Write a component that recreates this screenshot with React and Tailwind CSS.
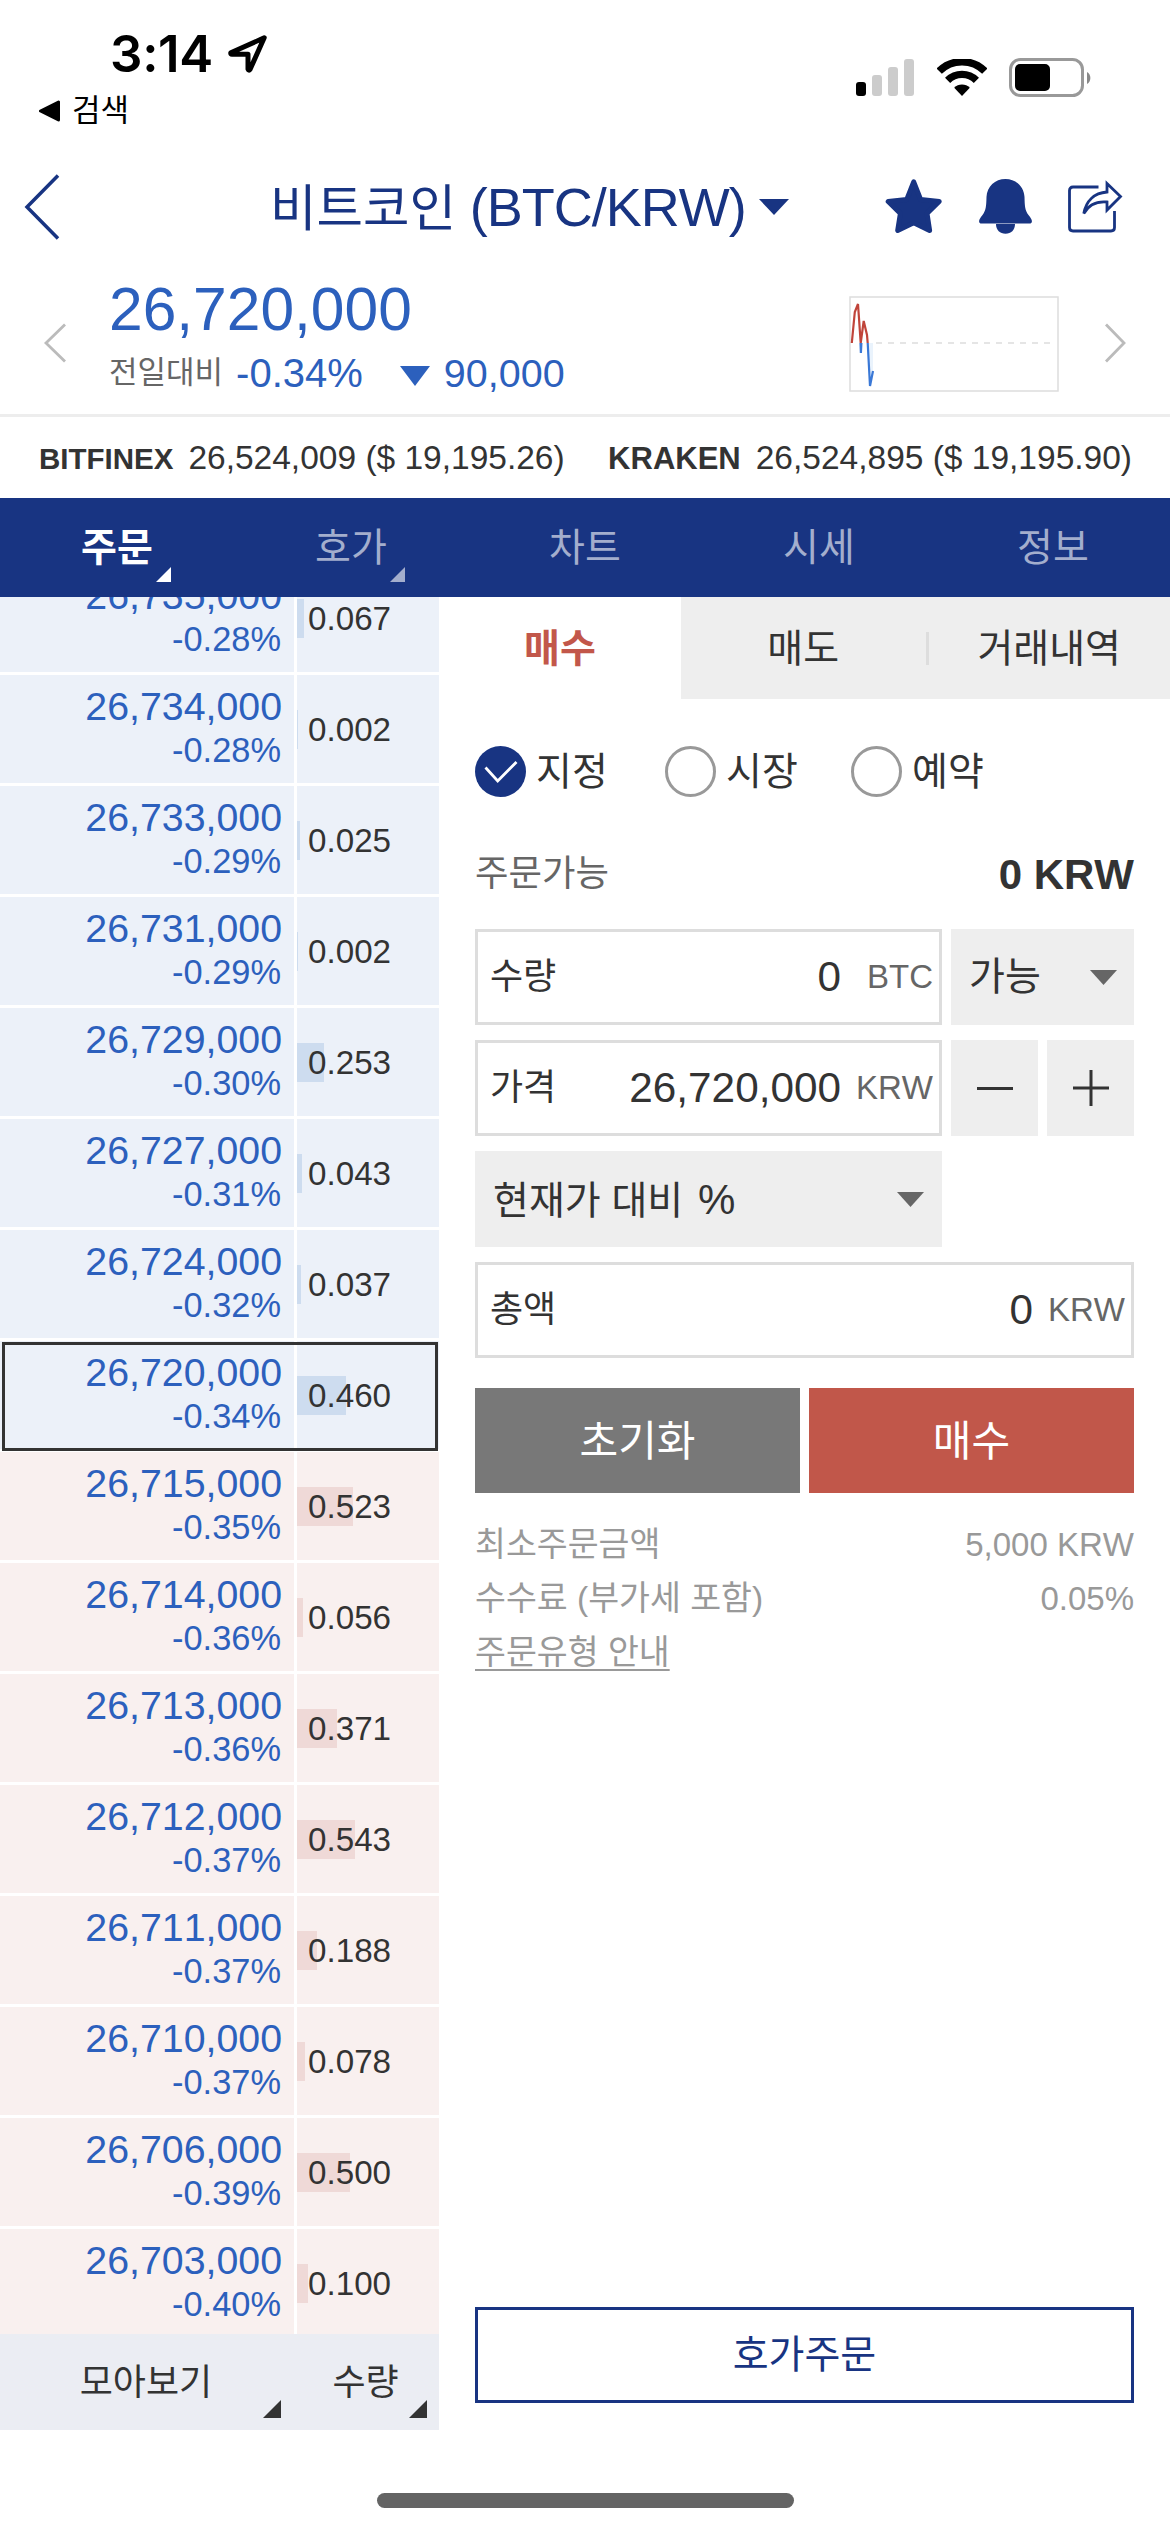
import React, { useState } from 'react'
import clsx from 'clsx'

const NAV = [
  { id: 'order', label: '주문', corner: true },
  { id: 'book', label: '호가', corner: true },
  { id: 'chart', label: '차트' },
  { id: 'price', label: '시세' },
  { id: 'info', label: '정보' },
]

const ROWS = [
  { price: '26,735,000', rate: '-0.28%', qty: '0.067', side: 'ask' },
  { price: '26,734,000', rate: '-0.28%', qty: '0.002', side: 'ask' },
  { price: '26,733,000', rate: '-0.29%', qty: '0.025', side: 'ask' },
  { price: '26,731,000', rate: '-0.29%', qty: '0.002', side: 'ask' },
  { price: '26,729,000', rate: '-0.30%', qty: '0.253', side: 'ask' },
  { price: '26,727,000', rate: '-0.31%', qty: '0.043', side: 'ask' },
  { price: '26,724,000', rate: '-0.32%', qty: '0.037', side: 'ask' },
  { price: '26,720,000', rate: '-0.34%', qty: '0.460', side: 'ask', current: true },
  { price: '26,715,000', rate: '-0.35%', qty: '0.523', side: 'bid' },
  { price: '26,714,000', rate: '-0.36%', qty: '0.056', side: 'bid' },
  { price: '26,713,000', rate: '-0.36%', qty: '0.371', side: 'bid' },
  { price: '26,712,000', rate: '-0.37%', qty: '0.543', side: 'bid' },
  { price: '26,711,000', rate: '-0.37%', qty: '0.188', side: 'bid' },
  { price: '26,710,000', rate: '-0.37%', qty: '0.078', side: 'bid' },
  { price: '26,706,000', rate: '-0.39%', qty: '0.500', side: 'bid' },
  { price: '26,703,000', rate: '-0.40%', qty: '0.100', side: 'bid' },
]

// bar width in px for one unit of quantity
const BAR_SCALE = 106.5

function StatusBar() {
  return (
    <div className="flex h-[156px] shrink-0 justify-between text-black">
      <div className="pt-6">
        <div className="flex items-start pl-[110px]">
          <span className="font-['Inter'] text-[51px] leading-[60px] font-semibold tracking-[-0.3px]">3:14</span>
          <svg width="39" height="38" viewBox="0 0 39 38" className="mt-[11px] ml-[15px]" fill="none" stroke="currentColor" strokeWidth="5" strokeLinejoin="round">
            <path d="M36.2 2.8 L2.8 17.800 Q2.500 19.300 4 19.300 H20 V34 Q20.800 36 22 34.500 Z" />
          </svg>
        </div>
        <div className="flex items-center gap-[12px] pl-[39px] text-[31px] leading-[54px]">
          <svg width="21" height="22" viewBox="0 0 21 22" fill="currentColor" stroke="currentColor" strokeWidth="3" strokeLinejoin="round">
            <path d="M1.5 11 L19.5 2 V20 Z" />
          </svg>
          <span>검색</span>
        </div>
      </div>
      <div className="flex items-start pt-[58px] pr-[79px]">
        <svg width="58" height="38" viewBox="0 0 58 38" className="mt-px">
          <rect x="0" y="23" width="10" height="14" rx="3" fill="#000" />
          <rect x="16" y="16" width="10" height="21" rx="3" fill="#ccc" />
          <rect x="32" y="8" width="10" height="29" rx="3" fill="#ccc" />
          <rect x="48" y="0" width="10" height="37" rx="3" fill="#ccc" />
        </svg>
        <svg width="50" height="38" viewBox="0 0 50 38" className="mt-px ml-[23px]" fill="none" stroke="#000">
          <path d="M2.2 12.2 A32.2 32.2 0 0 1 47.8 12.2" strokeWidth="7.5" />
          <path d="M10.6 21.4 A20.4 20.4 0 0 1 39.4 21.4" strokeWidth="7.3" />
          <path d="M25 37 L17.2 28.8 A11 11 0 0 1 32.8 28.8 Z" fill="#000" stroke="none" />
        </svg>
        <svg width="82" height="39" viewBox="0 0 82 39" className="ml-[22px]">
          <rect x="1.5" y="1.5" width="72" height="36" rx="10" fill="none" stroke="#999" strokeWidth="3" />
          <rect x="6" y="6" width="35" height="27" rx="5" fill="#000" />
          <path d="M78 14 A7 7 0 0 1 78 26 Z" fill="#888" />
        </svg>
      </div>
    </div>
  )
}

function Header() {
  return (
    <header className="flex h-[101px] shrink-0 items-center pr-[47px] pl-[24px] text-[#183482]">
      <svg width="36" height="66" viewBox="0 0 36 66" fill="none" stroke="currentColor" strokeWidth="3.5">
        <path d="M34 1.5 L3 33 L34 64.5" />
      </svg>
      <h1 className="ml-[210px] flex w-[475px] items-baseline pt-[2px] text-[54px] leading-[60px] whitespace-pre">
        <span className="text-[50.5px]">비트코인</span>
        <span className="tracking-[-1px]"> (BTC/KRW)</span>
      </h1>
      <svg width="30" height="16" viewBox="0 0 30 16" className="ml-[14px]" fill="currentColor">
        <path d="M0 0 H30 L15 16 Z" />
      </svg>
      <div className="ml-auto flex items-center gap-[36px]">
        <svg width="58" height="55" viewBox="0 0 58 55" fill="currentColor" stroke="currentColor" strokeWidth="5" strokeLinejoin="round">
          <path d="M28.7 2.8 L35.6 20.5 L54.2 22.4 L42 34.4 L44.6 51.5 L28.7 43.8 L12.7 51.5 L15.4 34.4 L3.2 22.4 L21.8 20.5 Z" />
        </svg>
        <svg width="53" height="56" viewBox="0 0 53 56" fill="currentColor">
          <path d="M26.5 0 C16 0 8 7.500 7.500 18 C7.200 27 7.200 31 3.500 36 C1 39 0 41 .1 42.500 C.3 44 1 44.600 2.500 44.600 H50.500 C52 44.600 52.700 44 52.900 42.500 C53 41 52 39 49.500 36 C45.800 31 45.800 27 45.500 18 C45 7.500 37 0 26.500 0 Z" />
          <path d="M17 45 H36 C36 51 32 54.800 26.500 54.800 C21 54.800 17 51 17 45 Z" />
        </svg>
        <svg width="55" height="54" viewBox="0 0 55 54" fill="none" stroke="currentColor" strokeWidth="2.8">
          <path d="M30.500 7 H5 Q1.500 7 1.500 10.500 V47.500 Q1.500 51 5 51 H43 Q46.500 51 46.500 47.500 V31" />
          <path d="M39 3.500 L52.500 16.500 L39 30 V22 C28 21 20 26 15.800 33.500 C18 21 26 13 39 12 Z" />
        </svg>
      </div>
    </header>
  )
}

function Ticker() {
  return (
    <section className="flex h-[160px] shrink-0 items-start border-b-[3px] border-[#ededed] text-[#2c60bd]">
      <svg width="24" height="40" viewBox="0 0 24 40" className="mt-[66px] ml-[43px]" fill="none" stroke="#bbb" strokeWidth="2.8">
        <path d="M22 1.500 L3 20 L22 38.500" />
      </svg>
      <div className="ml-[42px] pt-[22px]">
        <div className="text-[60.5px] leading-[60px]">26,720,000</div>
        <div className="mt-[14px] flex items-center leading-[40px]">
          <span className="text-[31px] text-[#666]">전일대비</span>
          <span className="ml-[13px] text-[40px]">-0.34%</span>
          <svg width="30" height="20" viewBox="0 0 30 20" className="mt-[5px] ml-[37px]" fill="currentColor">
            <path d="M0 0 H30 L15 20 Z" />
          </svg>
          <span className="ml-[14px] text-[39.5px]">90,000</span>
        </div>
      </div>
      <svg width="210" height="96" viewBox="0 0 210 96" className="mt-[39px] ml-auto" fill="none">
        <rect x="1" y="1" width="208" height="94" stroke="#ddd" strokeWidth="1.500" />
        <path d="M27 47 H202" stroke="#ddd" strokeWidth="1.500" strokeDasharray="6 6" />
        <path d="M19 47 L21 90 L24 75 V47 Z" fill="#eaf3fc" />
        <path d="M2.800 47 L5.800 16 L9 8 L11.700 47 L14.700 25 L18 39 L18.700 47" stroke="#c0443a" strokeWidth="2.2" />
        <path d="M11.500 47 L11.900 57 L12.400 47 M18.700 47 L21 90 L24 75" stroke="#3a78d6" strokeWidth="2.2" />
      </svg>
      <svg width="24" height="40" viewBox="0 0 24 40" className="mt-[66px] mr-[42px] ml-[45px]" fill="none" stroke="#bbb" strokeWidth="2.8">
        <path d="M2 1.500 L20 20 L2 38.500" />
      </svg>
    </section>
  )
}

function Exchanges() {
  return (
    <div className="flex h-[81px] shrink-0 items-baseline justify-between pr-[38px] pl-[39px] text-[33.5px] leading-[81px] text-[#333]">
      <div className="flex items-baseline gap-[15px]">
        <b className="text-[29.5px]">BITFINEX</b>
        <span>26,524,009 ($ 19,195.26)</span>
      </div>
      <div className="flex items-baseline gap-[15px]">
        <b className="text-[31px]">KRAKEN</b>
        <span>26,524,895 ($ 19,195.90)</span>
      </div>
    </div>
  )
}

function Corner({ className }) {
  return (
    <svg viewBox="0 0 16 16" className={clsx('absolute', className)} fill="currentColor">
      <path d="M16 0 V16 H0 Z" />
    </svg>
  )
}

function NavTabs({ active, onChange }) {
  return (
    <nav className="grid h-[99px] shrink-0 grid-cols-5 bg-[#183482] text-[39px]">
      {NAV.map(tab => (
        <button
          key={tab.id}
          onClick={() => onChange(tab.id)}
          className={clsx('flex items-center justify-center', active === tab.id ? 'font-bold text-white' : 'text-[#a3aecd]')}
        >
          <span className="relative leading-[99px]">
            {tab.label}
            {tab.corner && <Corner className="-right-[18px] bottom-[15px] h-[15px] w-[15px]" />}
          </span>
        </button>
      ))}
    </nav>
  )
}

function LadderRow({ row }) {
  const ask = row.side === 'ask'
  const bg = ask ? 'bg-[#ecf1f9]' : 'bg-[#f9f0ef]'
  return (
    <div className="relative flex h-[108px] shrink-0 gap-[3px]">
      <div className={clsx('w-[294px] pt-[7px] pr-[12px] text-right text-[#2c60bd]', bg)}>
        <div className="text-[39.3px] leading-[48px]">{row.price}</div>
        <div className="pr-px text-[34.4px] leading-[40px]">{row.rate}</div>
      </div>
      <div className={clsx('relative flex w-[142px] items-center', bg)}>
        <div
          className={clsx('absolute top-[35px] left-0 h-[39px]', ask ? 'bg-[#cddcef]' : 'bg-[#efd9d7]')}
          style={{ width: Number(row.qty) * BAR_SCALE }}
        />
        <span className="relative pt-[2px] pl-[11px] text-[33.2px] leading-[40px] text-[#333]">{row.qty}</span>
      </div>
      {row.current && <div className="absolute top-px left-[1.5px] h-[109px] w-[436px] border-[3px] border-[#333]" />}
    </div>
  )
}

function Ladder() {
  return (
    <aside className="flex w-[439px] shrink-0 flex-col">
      <div className="h-[1737px] overflow-hidden">
        <div className="-mt-[33px] flex flex-col gap-[3px]">
          {ROWS.map(row => (
            <LadderRow key={row.price} row={row} />
          ))}
        </div>
      </div>
      <div className="flex h-[96px] bg-[#ebedf3] text-[36px] leading-[98px] text-[#333]">
        <button className="relative w-[292px] text-center">
          모아보기
          <Corner className="right-[11px] bottom-[12px] h-[18px] w-[18px]" />
        </button>
        <button className="relative w-[147px] text-center">
          수량
          <Corner className="right-[12px] bottom-[12px] h-[18px] w-[18px]" />
        </button>
      </div>
    </aside>
  )
}

function Radio({ label, checked, onClick, className }) {
  return (
    <button onClick={onClick} className={clsx('flex items-center gap-[10px] text-[39px] leading-[51px]', className)}>
      <svg width="51" height="51" viewBox="0 0 51 51" fill="none">
        {checked ? (
          <>
            <circle cx="25.5" cy="25.5" r="25.5" fill="#183482" />
            <path d="M10.500 21.500 L22.700 35 L41.500 16" stroke="#fff" strokeWidth="2.8" />
          </>
        ) : (
          <circle cx="25.5" cy="25.5" r="24" stroke="#999" strokeWidth="3" />
        )}
      </svg>
      {label}
    </button>
  )
}

function Field({ label, value, unit }) {
  return (
    <div className="flex h-[96px] flex-1 items-center border-[3px] border-[#ddd] pr-[6px] pl-[12px] text-[#333]">
      <span className="text-[36px]">{label}</span>
      <span className="ml-auto text-[42.3px]">{value}</span>
      <span className="w-[92px] text-right text-[33px] text-[#666]">{unit}</span>
    </div>
  )
}

function Caret() {
  return (
    <svg width="27" height="15" viewBox="0 0 27 15" fill="#666">
      <path d="M0 0 H27 L13.500 15 Z" />
    </svg>
  )
}

function OrderPanel() {
  const [side, setSide] = useState('매수')
  const [type, setType] = useState('지정')

  return (
    <main className="flex flex-1 flex-col text-[#333]">
      <div className="flex h-[102px] text-[39px]">
        {['매수', '매도', '거래내역'].map(name => (
          <button
            key={name}
            onClick={() => setSide(name)}
            className={clsx(
              'flex items-center',
              name === '매수' ? 'w-[242px]' : 'w-[244.5px]',
              side === name ? 'font-bold text-[#c2574a]' : 'bg-[#eee]'
            )}
          >
            {name === '거래내역' && <span className="h-[33px] w-[3px] bg-[#ddd]" />}
            <span className="flex-1 pt-[2px]">{name}</span>
          </button>
        ))}
      </div>

      <div className="flex flex-1 flex-col pr-[36px] pl-[36px]">
        <div className="mt-[47px] flex">
          <Radio label="지정" checked={type === '지정'} onClick={() => setType('지정')} className="w-[190px]" />
          <Radio label="시장" checked={type === '시장'} onClick={() => setType('시장')} className="w-[186px]" />
          <Radio label="예약" checked={type === '예약'} onClick={() => setType('예약')} />
        </div>

        <div className="mt-[48px] flex h-[56px] items-center justify-between">
          <span className="pt-[2px] text-[36.4px] text-[#666]">주문가능</span>
          <b className="pt-[2px] text-[42px]">0 KRW</b>
        </div>

        <div className="mt-[28px] flex flex-col gap-[15px]">
          <div className="flex gap-[9px]">
            <Field label="수량" value="0" unit="BTC" />
            <button className="flex w-[183px] items-center justify-between bg-[#eee] pr-[17px] pl-[18px] text-[39px]">
              가능 <Caret />
            </button>
          </div>
          <div className="flex gap-[9px]">
            <Field label="가격" value="26,720,000" unit="KRW" />
            <button className="flex w-[87px] items-center justify-center bg-[#eee]">
              <span className="h-[3px] w-[36px] bg-[#333]" />
            </button>
            <button className="flex w-[87px] items-center justify-center bg-[#eee]">
              <svg width="36" height="36" viewBox="0 0 36 36" stroke="#333" strokeWidth="3">
                <path d="M18 0 V36 M0 18 H36" />
              </svg>
            </button>
          </div>
          <button className="flex h-[96px] w-[467px] items-center justify-between bg-[#eee] pr-[18px] pl-[18px] text-[39px]">
            <span>
              현재가 대비 <span className="ml-[4px] text-[42px]">%</span>
            </span>
            <Caret />
          </button>
          <div className="flex">
            <Field label="총액" value="0" unit="KRW" />
          </div>
        </div>

        <div className="mt-[30px] grid h-[105px] grid-cols-2 gap-[9px] text-[42px] text-white">
          <button className="bg-[#787878] pt-[2px]">초기화</button>
          <button className="bg-[#c1574a] pt-[2px]">매수</button>
        </div>

        <div className="mt-[25px] text-[33.6px] leading-[54px] text-[#999]">
          <div className="flex justify-between">
            <span>최소주문금액</span>
            <span className="text-[33px]">5,000 KRW</span>
          </div>
          <div className="flex justify-between">
            <span>수수료 (부가세 포함)</span>
            <span className="text-[33px]">0.05%</span>
          </div>
          <span className="underline decoration-[2px] underline-offset-[5px]">주문유형 안내</span>
        </div>

        <button className="mt-auto mb-[27px] h-[96px] border-[3px] border-[#183482] text-[39px] text-[#183482]">
          호가주문
        </button>
      </div>
    </main>
  )
}

export default function App() {
  const [tab, setTab] = useState('order')

  return (
    <div
      lang="ko"
      className="flex h-[2532px] w-[1170px] flex-col overflow-hidden bg-white font-['Liberation_Sans','Noto_Sans_CJK_KR',sans-serif] [font-kerning:none]"
    >
      <StatusBar />
      <Header />
      <Ticker />
      <Exchanges />
      <NavTabs active={tab} onChange={setTab} />
      <div className="flex h-[1833px] shrink-0">
        <Ladder />
        <OrderPanel />
      </div>
      {/* Home indicator */}
      <div className="mx-auto mt-[63px] h-[15px] w-[417px] shrink-0 rounded-full bg-[#646464]" />
    </div>
  )
}
